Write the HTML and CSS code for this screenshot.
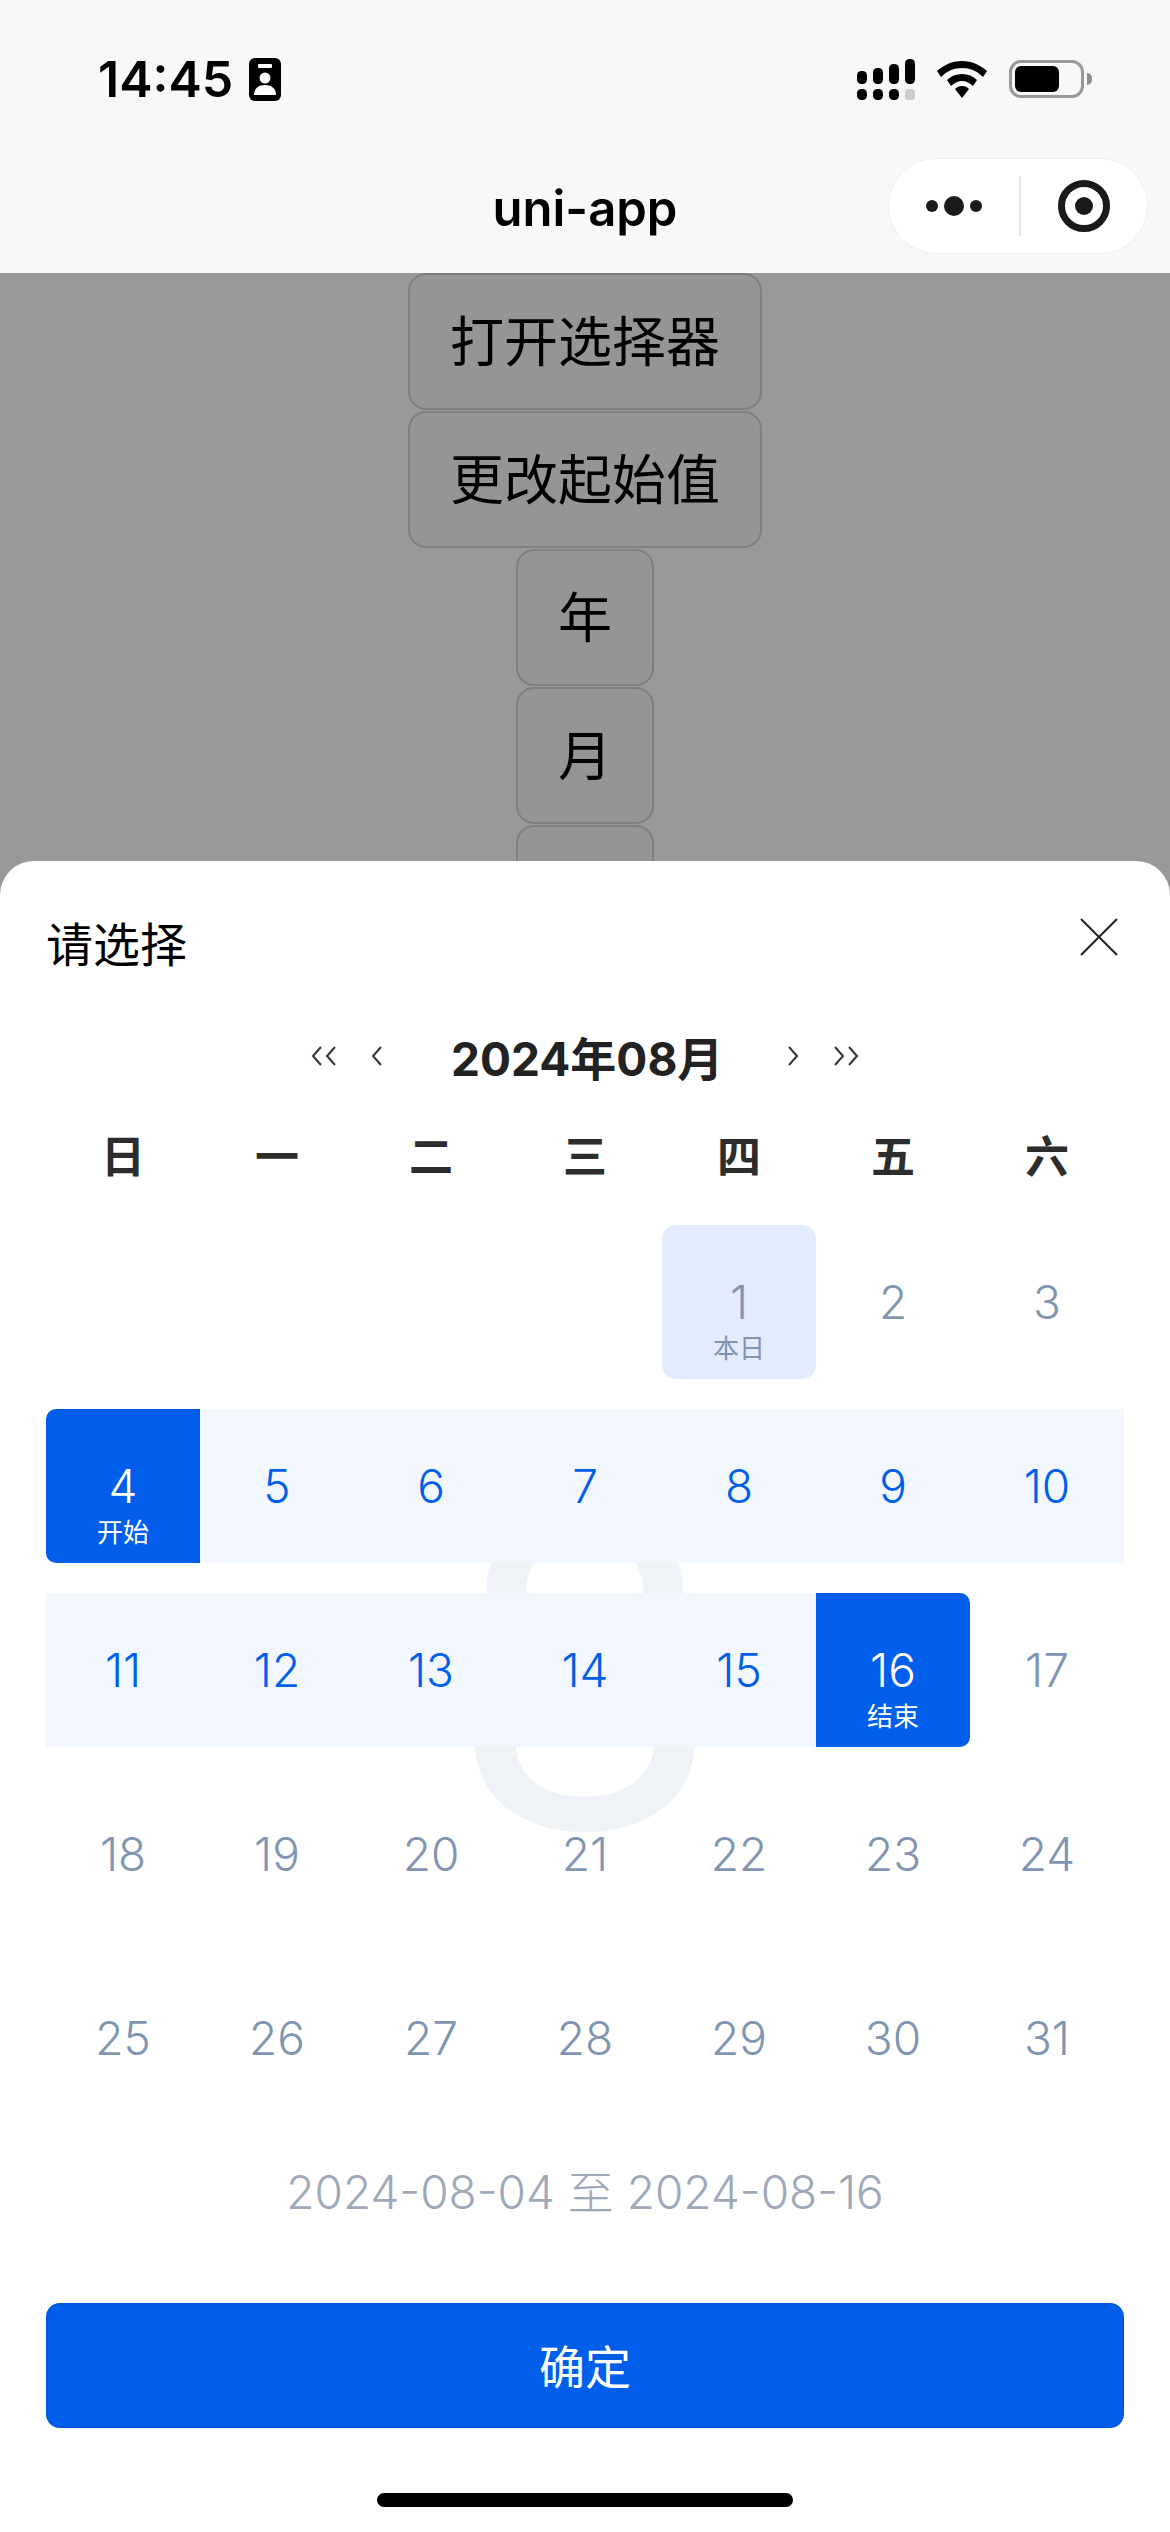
FILE: index.html
```html
<!DOCTYPE html>
<html>
<head>
  <meta charset="utf-8">
  <title>uni-app</title>
  <link rel="stylesheet" href="styles.css">
</head>
<body>
  <div class="screen">
    <header class="top">
      <div class="status">
        <div class="clock">
          <span class="time">14:45</span>
          <svg class="id-icon" width="32" height="43" viewBox="0 0 32 43">
            <rect width="32" height="43" rx="6" fill="#000"/>
            <rect x="9" y="6" width="14" height="4" rx="1" fill="#fff"/>
            <circle cx="16" cy="20" r="5.5" fill="#fff"/>
            <path d="M5 37c0-7 5-10 11-10s11 3 11 10z" fill="#fff"/>
          </svg>
        </div>
        <div class="status-right">
          <svg width="58" height="41" viewBox="0 0 58 41">
            <rect x="0" y="12" width="10" height="13" rx="4.5"/>
            <rect x="16" y="9" width="10" height="16" rx="4.5"/>
            <rect x="32" y="5" width="10" height="20" rx="4.5"/>
            <rect x="48" y="0" width="10" height="25" rx="4.5"/>
            <rect x="0" y="30" width="10" height="11" rx="4.5"/>
            <rect x="16" y="30" width="10" height="11" rx="4.5"/>
            <rect x="32" y="30" width="10" height="11" rx="4.5"/>
            <rect x="48" y="30" width="10" height="11" rx="3" fill="#ccc"/>
          </svg>
          <svg width="50" height="37" viewBox="0 0 50 37">
            <path d="M25 0C15 0 7 4 0 10l4 6C10 10 17 7 25 7s15 3 21 9l4-6C43 4 35 0 25 0z"/>
            <path d="M25 13c-6 0-11 2-15 6l4 6c3-3 7-5 11-5s8 2 11 5l4-6c-4-4-9-6-15-6z"/>
            <path d="M25 25c-3 0-5 1-7 3l7 9 7-9c-2-2-4-3-7-3z"/>
          </svg>
          <div class="battery">
            <div class="battery-body"><div class="battery-fill"></div></div>
            <div class="battery-nub"></div>
          </div>
        </div>
      </div>
      <nav class="nav">
        <span></span>
        <span class="nav-title">uni-app</span>
        <div class="capsule">
          <svg width="64" height="20" viewBox="0 0 64 20">
            <circle cx="6" cy="10" r="6" fill="#1a1a1a"/>
            <circle cx="28" cy="10" r="10" fill="#1a1a1a"/>
            <circle cx="50" cy="10" r="6" fill="#1a1a1a"/>
          </svg>
          <div class="capsule-line"></div>
          <svg width="52" height="52" viewBox="0 0 52 52">
            <circle cx="26" cy="26" r="22.5" fill="none" stroke="#1a1a1a" stroke-width="7"/>
            <circle cx="26" cy="26" r="9" fill="#1a1a1a"/>
          </svg>
        </div>
      </nav>
    </header>

    <main class="page">
      <button class="demo-btn">打开选择器</button>
      <button class="demo-btn">更改起始值</button>
      <button class="demo-btn">年</button>
      <button class="demo-btn">月</button>
      <button class="demo-btn">日</button>
      <div class="mask"></div>
    </main>

    <section class="sheet">
      <div class="sheet-head">
        <span class="sheet-title">请选择</span>
        <svg width="38" height="38" viewBox="0 0 38 38">
          <path d="M1 1l36 36M37 1L1 37" stroke="#222" stroke-width="2" fill="none"/>
        </svg>
      </div>

      <div class="month-bar">
        <div class="arrows">
          <svg width="28" height="20" viewBox="0 0 28 20"><path d="M10 1L2 10l8 9M24 1l-8 9 8 9" stroke="#333" stroke-width="2" fill="none"/></svg>
          <svg width="12" height="20" viewBox="0 0 12 20"><path d="M10 1L2 10l8 9" stroke="#333" stroke-width="2" fill="none"/></svg>
        </div>
        <span class="month-title">2024年08月</span>
        <div class="arrows">
          <svg width="12" height="20" viewBox="0 0 12 20"><path d="M2 1l8 9-8 9" stroke="#333" stroke-width="2" fill="none"/></svg>
          <svg width="28" height="20" viewBox="0 0 28 20"><path d="M4 1l8 9-8 9M18 1l8 9-8 9" stroke="#333" stroke-width="2" fill="none"/></svg>
        </div>
      </div>

      <div class="weekdays">
        <span>日</span><span>一</span><span>二</span><span>三</span><span>四</span><span>五</span><span>六</span>
      </div>

      <div class="days">
        <div class="watermark">8</div>
        <div class="day"></div>
        <div class="day"></div>
        <div class="day"></div>
        <div class="day"></div>
        <div class="day today"><span class="num">1</span><span class="tag">本日</span></div>
        <div class="day"><span class="num">2</span></div>
        <div class="day"><span class="num">3</span></div>
        <div class="day start"><span class="num">4</span><span class="tag">开始</span></div>
        <div class="day range"><span class="num">5</span></div>
        <div class="day range"><span class="num">6</span></div>
        <div class="day range"><span class="num">7</span></div>
        <div class="day range"><span class="num">8</span></div>
        <div class="day range"><span class="num">9</span></div>
        <div class="day range"><span class="num">10</span></div>
        <div class="day range"><span class="num">11</span></div>
        <div class="day range"><span class="num">12</span></div>
        <div class="day range"><span class="num">13</span></div>
        <div class="day range"><span class="num">14</span></div>
        <div class="day range"><span class="num">15</span></div>
        <div class="day end"><span class="num">16</span><span class="tag">结束</span></div>
        <div class="day"><span class="num">17</span></div>
        <div class="day"><span class="num">18</span></div>
        <div class="day"><span class="num">19</span></div>
        <div class="day"><span class="num">20</span></div>
        <div class="day"><span class="num">21</span></div>
        <div class="day"><span class="num">22</span></div>
        <div class="day"><span class="num">23</span></div>
        <div class="day"><span class="num">24</span></div>
        <div class="day"><span class="num">25</span></div>
        <div class="day"><span class="num">26</span></div>
        <div class="day"><span class="num">27</span></div>
        <div class="day"><span class="num">28</span></div>
        <div class="day"><span class="num">29</span></div>
        <div class="day"><span class="num">30</span></div>
        <div class="day"><span class="num">31</span></div>
      </div>

      <div class="summary">2024-08-04 至 2024-08-16</div>
      <button class="confirm">确定</button>
      <div class="home-bar"></div>
    </section>
  </div>
</body>
</html>
```

FILE: styles.css
```css
* {box-sizing: border-box;}

body {margin: 0;
      background-color: #ffffff;
      font-family: Inter, "Noto Sans CJK SC", sans-serif;}

.screen {position: relative;
         display: flex;
         flex-direction: column;
         width: 1170px;
         height: 2532px;
         overflow: hidden;}

/* status bar and navigation */
.top {height: 273px;
      background-color: #f8f8f8;}

.status {display: flex;
         justify-content: space-between;
         align-items: center;
         height: 138px;
         padding: 20px 78px 0 98px;}

.clock {display: flex;
        align-items: center;
        gap: 16px;}

.time {font-size: 50px;
       font-weight: 600;
       color: #000000;}

.status-right {display: flex;
               align-items: center;
               gap: 22px;}

.battery {display: flex;
          align-items: center;
          gap: 3px;}

.battery-body {width: 75px;
               height: 38px;
               padding: 3px;
               border: 3px solid #999999;
               border-radius: 12px;}

.battery-fill {width: 44px;
               height: 26px;
               background-color: #000000;
               border-radius: 6px;}

.battery-nub {width: 5px;
              height: 12px;
              background-color: #8e8e8e;
              border-radius: 0 6px 6px 0;}

.nav {display: grid;
      grid-template-columns: 1fr auto 1fr;
      align-items: center;
      height: 135px;
      padding: 0 22px;}

.nav-title {padding-top: 5px;
            font-size: 49px;
            font-weight: 600;
            color: #000000;}

.capsule {justify-self: end;
          display: flex;
          align-items: center;
          width: 260px;
          height: 96px;
          padding-left: 37px;
          background-color: #ffffff;
          border: 1px solid #efefef;
          border-radius: 48px;}

.capsule-line {width: 2px;
               height: 60px;
               margin: 0 37px 0 29px;
               background-color: #e6e6e6;}

/* page behind the sheet */
.page {position: relative;
       flex: 1;
       display: flex;
       flex-direction: column;
       align-items: center;
       gap: 1px;
       background-color: #ffffff;}

.demo-btn {height: 137px;
           padding: 0 40px 6px;
           flex-shrink: 0;
           font-family: inherit;
           font-size: 54px;
           color: #000000;
           background-color: #f8f8f8;
           border: 2px solid #d4d4d4;
           border-radius: 18px;}

.mask {position: absolute;
       top: 0;
       left: 0;
       right: 0;
       bottom: 0;
       background-color: rgba(0, 0, 0, 0.4);}

/* bottom sheet */
.sheet {position: absolute;
        left: 0;
        right: 0;
        top: 861px;
        bottom: 0;
        padding: 0 46px;
        background-color: #ffffff;
        border-radius: 34px 34px 0 0;}

.sheet-head {display: flex;
             justify-content: space-between;
             align-items: center;
             height: 152px;
             padding-right: 6px;}

.sheet-title {font-size: 47px;
              color: #000000;
              padding-top: 8px;}

.month-bar {display: flex;
             justify-content: center;
             align-items: center;
             height: 86px;}

.month-title {width: 268px;
              margin: 0 68px;
              font-size: 46px;
              font-weight: 700;
              white-space: nowrap;
              text-align: center;
              color: #222222;}

.arrows {display: flex;
         justify-content: space-between;
         align-items: center;
         width: 72px;}

.weekdays {display: grid;
           grid-template-columns: repeat(7, 1fr);
           height: 110px;
           margin-bottom: 16px;
           align-items: center;
           text-align: center;
           font-size: 44px;
           font-weight: 700;
           color: #2d2d2d;}

.days {position: relative;
       display: grid;
       grid-template-columns: repeat(7, 1fr);
       grid-auto-rows: 154px;
       row-gap: 30px;
       margin-bottom: 24px;}

.watermark {position: absolute;
            left: 0;
            right: 0;
            top: 193px;
            font-size: 440px;
            line-height: 500px;
            text-align: center;
            color: #eff3f8;}

.day {position: relative;
      display: flex;
      flex-direction: column;
      align-items: center;
      padding-top: 52px;
      color: #7f95b2;}

.num {font-size: 46px;
      font-weight: 300;
      line-height: 50px;}

.tag {font-size: 26px;
      line-height: 44px;}

.today {background-color: #e3ecfc;
        border-radius: 14px;}

.range {color: #005eeb;
        background-color: #f2f6fd;}

.start,
.end {color: #ffffff;
      background-color: #005eeb;}

.start {border-radius: 10px 0 0 10px;}

.end {border-radius: 0 10px 10px 0;}

.summary {height: 106px;
          line-height: 106px;
          text-align: center;
          font-size: 46px;
          font-weight: 300;
          color: #9fa8b8;}

.confirm {display: block;
          width: 100%;
          height: 125px;
          margin-top: 58px;
          padding-bottom: 5px;
          font-family: inherit;
          font-size: 46px;
          color: #ffffff;
          background-color: #005eeb;
          border: 2px solid #0058dd;
          border-radius: 14px;}

.home-bar {width: 416px;
           height: 14px;
           margin: 65px auto 0;
           background-color: #000000;
           border-radius: 7px;}
```
